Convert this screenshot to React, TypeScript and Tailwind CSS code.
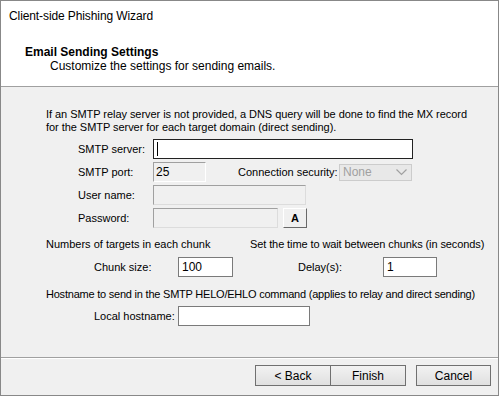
import React from "react";

const sunken = "border-t border-l border-b border-r border-t-[#a0a0a0] border-l-[#a0a0a0] border-b-white border-r-white bg-[#f0f0f0]";

function Label({ w, ml, children }: { w: number; ml: number; children: React.ReactNode }) {
  return (
    <div className="shrink-0 leading-[13px]" style={{ width: w, marginLeft: ml }}>
      {children}
    </div>
  );
}

export default function App() {
  return (
    <div
      className="w-[499px] h-[396px] border border-[#888888] bg-[#f0f0f0] flex flex-col text-black overflow-hidden"
      style={{ fontFamily: '"Liberation Sans", Arial, sans-serif' }}
    >
      {/* Header */}
      <div className="h-[86px] shrink-0 bg-white border-b border-[#a0a0a0] flex flex-col">
        <div className="pl-[8px] pt-[7px] text-[12px] leading-[16px] tracking-[-0.1px]">Client-side Phishing Wizard</div>
        <div className="pl-[24px] pt-[21px] text-[12px] leading-[14px] font-bold">Email Sending Settings</div>
        <div className="pl-[49px] text-[12px] leading-[14px]">Customize the settings for sending emails.</div>
      </div>

      {/* Body */}
      <div className="flex-1 flex flex-col text-[11px] pt-[21px]">
        <div className="pl-[45px] leading-[13px] tracking-[-0.05px]">
          If an SMTP relay server is not provided, a DNS query will be done to find the MX record
          <br />
          for the SMTP server for each target domain (direct sending).
        </div>

        {/* SMTP server */}
        <div className="flex items-center h-[20px] mt-[5px]">
          <Label w={75} ml={77}>SMTP server:</Label>
          <div className="w-[260px] h-[20px] bg-white border border-[#222] flex items-center pl-[3px]">
            <div className="w-[1px] h-[14px] bg-black" />
          </div>
        </div>

        {/* SMTP port */}
        <div className="flex items-center h-[20px] mt-[3px]">
          <Label w={75} ml={77}>SMTP port:</Label>
          <div className={`w-[53px] h-[20px] ${sunken} flex items-center pl-[2px] text-[12px]`}>25</div>
          <Label w={101} ml={32}>Connection security:</Label>
          <div className="w-[73px] h-[17px] bg-[#e8e8e8] border border-[#cccccc] flex items-center justify-between pl-[3px] pr-[4px] text-[#a0a0a0] text-[12px]">
            <span>None</span>
            <svg width="11" height="7" viewBox="0 0 11 7">
              <polyline points="0.5,0.5 5.5,5.5 10.5,0.5" fill="none" stroke="#a0a0a0" strokeWidth="1.2" />
            </svg>
          </div>
        </div>

        {/* User name */}
        <div className="flex items-center h-[20px] mt-[3px]">
          <Label w={75} ml={77}>User name:</Label>
          <div className="w-[153px] h-[20px] bg-[#f0f0f0] border border-t-[#a0a0a0] border-l-[#a0a0a0] border-b-[#dcdcdc] border-r-[#dcdcdc]" />
        </div>

        {/* Password */}
        <div className="flex items-center h-[20px] mt-[3px]">
          <Label w={75} ml={77}>Password:</Label>
          <div className="w-[125px] h-[20px] bg-[#f0f0f0] border border-t-[#a0a0a0] border-l-[#a0a0a0] border-b-[#dcdcdc] border-r-[#dcdcdc]" />
          <div className="ml-[5px] w-[24px] h-[20px] bg-[#f0f0f0] border border-t-white border-l-white border-b-[#696969] border-r-[#696969] flex items-center justify-center font-bold text-[11px]">
            A
          </div>
        </div>

        {/* Chunk headings */}
        <div className="flex mt-[10px] leading-[13px]">
          <div className="ml-[45px] w-[204px]">Numbers of targets in each chunk</div>
          <div className="tracking-[-0.1px]">Set the time to wait between chunks (in seconds)</div>
        </div>

        {/* Chunk row */}
        <div className="flex items-center h-[20px] mt-[6px]">
          <Label w={84} ml={93}>Chunk size:</Label>
          <div className="w-[55px] h-[20px] bg-white border border-[#7a7a7a] flex items-center pl-[3px] text-[12px]">100</div>
          <Label w={85} ml={65}>Delay(s):</Label>
          <div className="w-[54px] h-[20px] bg-white border border-[#7a7a7a] flex items-center pl-[3px] text-[12px]">1</div>
        </div>

        {/* Hostname heading */}
        <div className="pl-[45px] mt-[11px] leading-[13px] tracking-[-0.22px]">
          Hostname to send in the SMTP HELO/EHLO command (applies to relay and direct sending)
        </div>

        {/* Local hostname row */}
        <div className="flex items-center h-[20px] mt-[5px]">
          <Label w={84} ml={93}>Local hostname:</Label>
          <div className="w-[132px] h-[20px] bg-white border border-[#7a7a7a]" />
        </div>
      </div>

      {/* Footer */}
      <div className="h-[38px] shrink-0 border-t border-[#a0a0a0] flex flex-col">
        <div className="flex-1 border-t border-white flex items-start justify-end pt-[6px] pr-[7px] text-[12px]">
          <div className="w-[76px] h-[21px] border border-[#707070] bg-gradient-to-b from-[#f2f2f2] to-[#e0e0e0] flex items-center justify-center">
            &lt; Back
          </div>
          <div className="w-[75px] h-[21px] border border-l-0 border-[#707070] bg-gradient-to-b from-[#f2f2f2] to-[#e0e0e0] flex items-center justify-center">
            Finish
          </div>
          <div className="ml-[10px] w-[75px] h-[21px] border border-[#707070] bg-gradient-to-b from-[#f2f2f2] to-[#e0e0e0] flex items-center justify-center">
            Cancel
          </div>
        </div>
      </div>
    </div>
  );
}
